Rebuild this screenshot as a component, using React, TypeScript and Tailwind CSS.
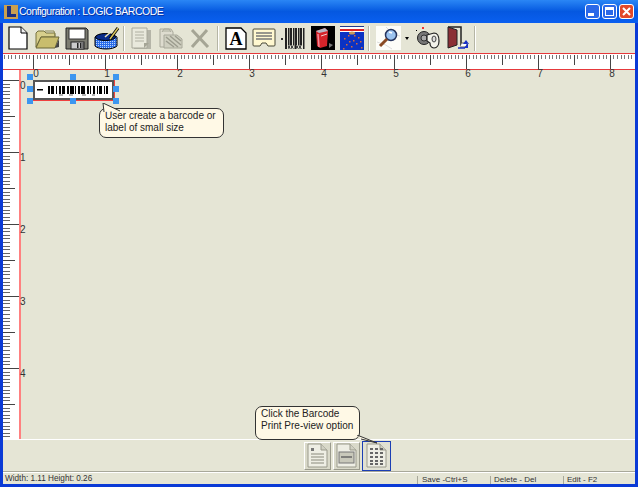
const font = "font-['Liberation_Sans',Arial,sans-serif]";

const rulerX = Array.from({ length: 176 }, (_, i) => i - 9);
const rulerY = Array.from({ length: 104 }, (_, i) => i);
const topLabels = [36, 107, 180, 252, 324, 396, 468, 540, 612];
const sideLabels = [86, 158, 230, 302, 374];
const bars = [
  [47, 2], [50, 3], [55, 1], [58, 2], [61, 3], [66, 2], [69, 4], [74, 1], [77, 2], [80, 4],
  [86, 2], [89, 1], [92, 2], [96, 1], [98, 3], [103, 1], [105, 2],
];

function TopRuler() {
  return (
    <svg width="632" height="15" className="block">
      {rulerX.map((i) => {
        const x = 30 + i * 3.605;
        const major = i % 20 === 0;
        const half = i % 10 === 0;
        if (x > 632) return null;
        return (
          <line
            key={i}
            x1={Math.round(x) + 0.5}
            x2={Math.round(x) + 0.5}
            y1="1"
            y2={major ? 15 : half ? 11 : 5}
            stroke={major || half ? "#444" : "#777"}
          />
        );
      })}
    </svg>
  );
}

function SideRuler() {
  return (
    <svg width="16" height="369" className="block">
      {rulerY.map((i) => {
        const y = 10 + i * 3.6;
        const major = i % 20 === 0;
        const half = i % 10 === 0;
        return (
          <line
            key={i}
            x1="0"
            x2={major ? 16 : half ? 12 : 7}
            y1={Math.round(y) + 0.5}
            y2={Math.round(y) + 0.5}
            stroke={major || half ? "#444" : "#666"}
          />
        );
      })}
    </svg>
  );
}

function Sep({ ml }: { ml: string }) {
  return <div className={`h-[25px] w-[2px] border-l border-r border-l-[#b5b5a5] border-r-white ${ml}`} />;
}

function NewIcon() {
  return (
    <svg width="20" height="24" viewBox="0 0 20 24" className="ml-[5px]">
      <path d="M1 1h12l6 6v16H1z" fill="#fff" stroke="#000" strokeWidth="1.200" />
      <path d="M13 1v6h6" fill="#eee" stroke="#000" />
    </svg>
  );
}

function OpenIcon() {
  return (
    <svg width="25" height="21" viewBox="0 0 25 21" className="ml-[7px]">
      <path d="M1 19V5l2-2h6l2 2h9v4H6z" fill="#d8cf8c" stroke="#77733f" />
      <path d="M1 20l5-11h18l-4 11z" fill="#c9bd6d" stroke="#6b6738" />
      <path d="M10 3h9l1 5" fill="none" stroke="#8b8750" />
      <path d="M20 20l4-9v8z" fill="#444" />
    </svg>
  );
}

function SaveIcon() {
  return (
    <svg width="24" height="23" viewBox="0 0 24 23" className="ml-[5px]">
      <path d="M1 1h20l2 2v19H1z" fill="#7b7b70" stroke="#222" />
      <rect x="4" y="2" width="16" height="10" fill="#fff" stroke="#333" />
      <rect x="6" y="15" width="13" height="7" fill="#ccc" stroke="#222" />
      <rect x="12" y="16" width="1.500" height="5" fill="#222" />
      <rect x="15" y="16" width="1.500" height="5" fill="#222" />
      <rect x="17.500" y="16" width="1" height="5" fill="#222" />
    </svg>
  );
}

function PaintIcon() {
  return (
    <svg width="26" height="23" viewBox="0 0 26 23" className="ml-[5px]">
      <defs>
        <pattern id="dots" width="2" height="2" patternUnits="userSpaceOnUse">
          <rect width="2" height="2" fill="#2a6ce8" />
          <rect width="1" height="1" fill="#bcd6fa" />
        </pattern>
      </defs>
      <path d="M1 10c5-4 17-4 22 0v9c-4 4-18 4-22 0z" fill="url(#dots)" stroke="#000" />
      <ellipse cx="11.500" cy="10" rx="10" ry="3.500" fill="#0a2c8a" stroke="#000" />
      <path d="M24 1l-8 11" stroke="#000" strokeWidth="3" />
      <path d="M24 1l-8 11" stroke="#d9c65e" strokeWidth="1.500" />
      <path d="M19 3l-8 7" stroke="#f1e9b8" strokeWidth="1.500" />
    </svg>
  );
}

function GrayDocIcon() {
  return (
    <svg width="22" height="23" viewBox="0 0 22 23" className="ml-[6px]">
      <path d="M3 3h17v19H3z" fill="#b5b5a8" />
      <path d="M1 1h15v20H1z" fill="#e9e9dc" stroke="#a8a89a" />
      <path d="M4 5h9M4 8h9M4 11h9M4 14h9" stroke="#b0b0a2" />
      <path d="M13 21v-5h5z" fill="#a5a596" />
    </svg>
  );
}

function GrayCopyIcon() {
  return (
    <svg width="26" height="22" viewBox="0 0 26 22" className="ml-[5px]">
      <path d="M2 2h11l2 3v15H2z" fill="#dedccf" stroke="#a8a89a" />
      <path d="M4 5l2-3h5l2 3" fill="#c5c5b6" stroke="#a8a89a" />
      <path d="M6 8h13l5 4v9H6z" fill="#cfcfc0" stroke="#a8a89a" />
      <path d="M8 10l12 10M8 14l8 6M12 9l11 9M17 9l6 5" stroke="#9c9c8e" strokeWidth="1.500" />
    </svg>
  );
}

function GrayXIcon() {
  return (
    <svg width="20" height="19" viewBox="0 0 20 19" className="ml-[6px]">
      <path d="M2 1l16 17M17 1L2 18" stroke="#a5a595" strokeWidth="3" fill="none" />
    </svg>
  );
}

function TextIcon() {
  return (
    <svg width="22" height="23" viewBox="0 0 22 23">
      <path d="M1 1h15l5 5v16H1z" fill="#fff" stroke="#000" strokeWidth="1.300" />
      <text x="11" y="18" textAnchor="middle" fontSize="18" fontWeight="700" fontFamily="'Liberation Serif', serif" fill="#000">
        A
      </text>
    </svg>
  );
}

function LabelIcon() {
  return (
    <svg width="24" height="20" viewBox="0 0 24 20" className="ml-[5px]">
      <path d="M2 1h20q1 0 1 1v15q0 1-1 1h-6l-2-3h-4l-2 3H2q-1 0-1-1V2q0-1 1-1z" fill="#fff8d0" stroke="#4a4a3a" />
      <path d="M4 5h16M4 8h16M4 11h16" stroke="#777" strokeWidth="1.300" />
    </svg>
  );
}

function BarcodeIcon() {
  const xs = [4, 7, 9, 12, 14, 17, 19, 22];
  return (
    <svg width="26" height="23" viewBox="0 0 26 23" className="ml-[5px]">
      <rect x="0" y="11" width="2" height="2" fill="#333" />
      {xs.map((x, i) => (
        <rect key={x} x={x} y="1" width={i % 2 === 0 ? 2 : 1.500} height="21" fill="#222" />
      ))}
      <path d="M7 20h6M15 20h6" stroke="#e5e5d5" strokeWidth="3" />
      <path d="M7 20h6M15 20h6" stroke="#444" strokeWidth="2.500" strokeDasharray="2 1" />
    </svg>
  );
}

function CanIcon() {
  return (
    <svg width="24" height="24" viewBox="0 0 24 24" className="ml-[4px]">
      <rect width="24" height="24" fill="#000" />
      <path d="M5 5l9-3 3 3-1 15-7 2-3-2z" fill="#d4242a" />
      <path d="M5 5l9-3 3 3-9 2z" fill="#b7b7c4" />
      <path d="M7 8l1 13" stroke="#f58a9a" strokeWidth="1.500" />
      <path d="M10 10l6-2" stroke="#f0d0d0" />
      <path d="M18 17l4 2-4 3z" fill="#777" />
    </svg>
  );
}

function TankIcon() {
  const dots = [[4, 12], [8, 9], [13, 14], [18, 11], [6, 18], [11, 20], [16, 17], [21, 21], [3, 22], [20, 15], [14, 9], [9, 15]];
  return (
    <svg width="24" height="24" viewBox="0 0 24 24" className="ml-[5px]">
      <rect width="24" height="24" fill="#fff" />
      <rect width="24" height="1" fill="#223a8c" />
      <rect y="3" width="24" height="2" fill="#d22" />
      <rect y="6" width="24" height="18" fill="#0b32c4" />
      {dots.map(([x, y]) => (
        <rect key={`${x}-${y}`} x={x} y={y} width="1.500" height="1.500" fill="#d6683a" />
      ))}
      <ellipse cx="12" cy="7" rx="3" ry="1.500" fill="#c89a5a" />
    </svg>
  );
}

function ZoomIcon() {
  return (
    <svg width="25" height="24" viewBox="0 0 25 24" className="ml-[6px]">
      <rect width="25" height="24" fill="#fdfdf8" />
      <path d="M1 16Q10 18 16 23M10 1q7 8 14 9" stroke="#ddd" fill="none" />
      <circle cx="15" cy="9" r="5.500" fill="#9cc4f0" stroke="#26355e" strokeWidth="1.500" />
      <path d="M13 6l3 1" stroke="#fff" strokeWidth="1.500" />
      <path d="M11 13l-7 7" stroke="#8a4a22" strokeWidth="3" />
    </svg>
  );
}

function ArrowDownIcon() {
  return <div className="ml-[4px] h-0 w-0 border-x-[2px] border-t-[3px] border-x-transparent border-t-black" />;
}

function KeyIcon() {
  return (
    <svg width="25" height="23" viewBox="0 0 25 23" className="ml-[6px]">
      <rect x="7" y="0" width="2" height="2" fill="#e33" />
      <rect x="1" y="3" width="1" height="1" fill="#000" />
      <circle cx="9" cy="11" r="6.500" fill="#777" stroke="#222" />
      <circle cx="9" cy="11" r="3" fill="#aaa" stroke="#333" />
      <path d="M12 8l7-2c4 0 5 4 5 8s-2 7-5 7c-3 0-4-3-4-5l-3-2z" fill="#f2f2ea" stroke="#222" strokeWidth="1.200" />
      <ellipse cx="19" cy="12" rx="2" ry="3" fill="#ddd" stroke="#444" />
    </svg>
  );
}

function DoorIcon() {
  return (
    <svg width="24" height="24" viewBox="0 0 24 24" className="ml-[6px]">
      <path d="M2 1h13v19" fill="none" stroke="#222" strokeWidth="1.500" />
      <path d="M2 1v21l9-3V4z" fill="#8a2f36" stroke="#222" />
      <path d="M16 17h5v4h-7" fill="#fff" stroke="#555" />
      <path d="M18 22h4v-5M20 14l3 4h-6z" fill="#1730c8" />
      <path d="M12 22h7" stroke="#1730c8" strokeWidth="1.500" />
    </svg>
  );
}

function PageButton({ kind, active }: { kind: "lines" | "label" | "grid"; active?: boolean }) {
  return (
    <button
      className={`flex items-center justify-center ${
        active
          ? "h-[30px] w-[29px] border border-[#1c3fb4] bg-[#e1e1d2]"
          : "h-[28px] w-[27px] border border-b-[#9a9a8c] border-l-white border-r-[#9a9a8c] border-t-white bg-[#d9d9c9]"
      }`}
    >
      <svg width="21" height="25" viewBox="0 0 21 25">
        <path d="M1 1h13l6 6v17H1z" fill="#eeeee4" stroke="#9a9a8c" />
        <path d="M14 1v6h6" fill="#d0d0c2" stroke="#9a9a8c" />
        {kind === "lines" && (
          <>
            <rect x="4" y="5" width="3" height="3" fill="#777" />
            <path d="M4 11h13M4 14h13M4 17h13M4 20h13" stroke="#8a8a7c" />
          </>
        )}
        {kind === "label" && (
          <>
            <rect x="3" y="9" width="15" height="11" fill="#c9c9bb" stroke="#777" />
            <path d="M5 14h11" stroke="#666" strokeWidth="1.500" />
          </>
        )}
        {kind === "grid" &&
          [5, 9, 13, 17, 20].flatMap((y) =>
            [4, 9, 14].map((x) => <rect key={`${x}-${y}`} x={x} y={y} width="3" height="2" fill="#666" />),
          )}
      </svg>
    </button>
  );
}

function Callout({ className, tail, children }: { className: string; tail: React.ReactNode; children: React.ReactNode }) {
  return (
    <div className={`absolute rounded-[7px] border border-[#333] bg-[#fff9e6] text-[10px] leading-[12px] text-[#222] ${className}`}>
      {children}
      {tail}
    </div>
  );
}

export default function App() {
  return (
    <div className={`relative h-[487px] w-[638px] overflow-hidden ${font}`}>
      <div className="flex h-full flex-col border-x-[3px] border-b-[3px] border-[#0a3ad6] bg-[#e5e5d5]">
        {/* title bar */}
        <div className="-mx-[3px] flex h-[23px] shrink-0 items-center bg-gradient-to-b from-[#2a86f5] via-[#0558e0] to-[#0a5ff0]">
          <div className="ml-[4px] flex h-[14px] w-[14px] items-center justify-center bg-[#c9a050]">
            <span className="h-[11px] w-[9px] border-b-[3px] border-l-[4px] border-[#1a2f80]" />
          </div>
          <span className="ml-[1px] text-[10.5px] tracking-[-0.5px] text-white [text-shadow:1px_1px_0_#0a2f9c]">
            Configuration : LOGIC BARCODE
          </span>
          <div className="ml-auto mr-[4px] flex gap-[2px]">
            <div className="relative h-[15px] w-[15px] rounded-[3px] border border-white bg-[#2a68e8]">
              <span className="absolute bottom-[2px] left-[2px] h-[3px] w-[6px] bg-white" />
            </div>
            <div className="flex h-[15px] w-[15px] items-center justify-center rounded-[3px] border border-white bg-[#2a68e8]">
              <span className="h-[9px] w-[9px] border border-t-[3px] border-white" />
            </div>
            <div className="flex h-[15px] w-[15px] items-center justify-center rounded-[3px] border border-white bg-[#e2492a]">
              <svg width="9" height="9" viewBox="0 0 9 9">
                <path d="M1 1l7 7M8 1L1 8" stroke="#fff" strokeWidth="2" />
              </svg>
            </div>
          </div>
        </div>

        {/* toolbar */}
        <div className="flex h-[30px] shrink-0 items-center">
          <NewIcon />
          <OpenIcon />
          <SaveIcon />
          <PaintIcon />
          <Sep ml="ml-[3px]" />
          <GrayDocIcon />
          <GrayCopyIcon />
          <GrayXIcon />
          <Sep ml="ml-[7px]" />
          <div className="ml-[6px]">
            <TextIcon />
          </div>
          <LabelIcon />
          <BarcodeIcon />
          <CanIcon />
          <TankIcon />
          <Sep ml="ml-[4px]" />
          <ZoomIcon />
          <ArrowDownIcon />
          <KeyIcon />
          <DoorIcon />
          <Sep ml="ml-[4px]" />
        </div>

        {/* top ruler */}
        <div className="h-[17px] shrink-0 border-y border-[#e6393c] bg-white">
          <TopRuler />
        </div>

        {/* ruler + canvas */}
        <div className="flex min-h-0 flex-1">
          <div className="w-[18px] shrink-0 overflow-hidden border-r-2 border-[#ff8080] bg-white">
            <SideRuler />
          </div>
          <div className="flex-1 bg-[#e5e5d5]" />
        </div>

        {/* preview buttons */}
        <div className="flex h-[33px] shrink-0 items-center border-y border-b-[#a8a89a] border-t-white pl-[301px]">
          <div className="flex items-center gap-[2px]">
            <PageButton kind="lines" />
            <PageButton kind="label" />
            <PageButton kind="grid" active />
          </div>
        </div>

        {/* status bar */}
        <div className="flex h-[12px] shrink-0 items-center border-t border-white pt-[2px] text-[8px] leading-none text-[#333]">
          <div className="w-[414px] pl-[2px] text-[8.2px]">Width: 1.11 Height: 0.26</div>
          <div className="w-[73px] border-l border-[#a8a89a] pl-[4px]">Save -Ctrl+S</div>
          <div className="w-[73px] border-l border-[#a8a89a] pl-[3px]">Delete - Del</div>
          <div className="flex-1 border-l border-[#a8a89a] pl-[3px]">Edit - F2</div>
        </div>
      </div>

      {/* ruler numbers */}
      {topLabels.map((x, i) => (
        <span key={x} className="absolute top-[69px] -translate-x-1/2 text-[10px] leading-[10px] text-[#333]" style={{ left: x }}>
          {i}
        </span>
      ))}
      {sideLabels.map((y, i) => (
        <span key={y} className="absolute left-[20px] -translate-y-1/2 text-[10px] leading-[10px] text-[#333]" style={{ top: y }}>
          {i}
        </span>
      ))}

      {/* selected barcode on the canvas */}
      <div className="absolute left-[32px] top-[79px] h-[22px] w-[83px] border border-[#f04040] border-l-transparent border-t-transparent">
        <div className="relative h-full w-full border-2 border-[#555] bg-white">
          <svg width="79" height="18" viewBox="33 80 79 18" className="absolute -left-[1px] -top-[1px]">
            <rect x="36" y="88" width="6" height="1.500" fill="#000" />
            {bars.map(([x, w]) => (
              <rect key={x} x={x} y="85" width={w} height="8" fill="#000" />
            ))}
            <path d="M58 94h4M68 94h4M81 94h4M91 94h3" stroke="#666" />
          </svg>
        </div>
      </div>
      {[
        [27, 74], [70, 74], [113, 74],
        [27, 86], [113, 86],
        [27, 98], [70, 98], [113, 98],
      ].map(([x, y]) => (
        <span key={`${x}-${y}`} className="absolute h-[6px] w-[6px] bg-[#3c96f0]" style={{ left: x, top: y }} />
      ))}

      <Callout
        className="left-[99px] top-[108px] h-[30px] w-[125px] pl-[5px] pt-[1px]"
        tail={
          <svg width="22" height="9" viewBox="0 0 22 9" className="absolute -top-[6px] left-[1px]">
            <path d="M3 9L2 0l17 8" fill="#fff9e6" stroke="#333" />
          </svg>
        }
      >
        User create a barcode or
        <br />
        label of small size
      </Callout>

      <Callout
        className="left-[255px] top-[406px] h-[34px] w-[105px] pl-[5px] pt-[1px]"
        tail={
          <svg width="22" height="11" viewBox="0 0 22 11" className="absolute -bottom-[7px] right-[-20px]">
            <path d="M0 0l20 8-16-4" fill="#fff9e6" stroke="#333" />
          </svg>
        }
      >
        Click the Barcode
        <br />
        Print Pre-view option
      </Callout>
    </div>
  );
}
